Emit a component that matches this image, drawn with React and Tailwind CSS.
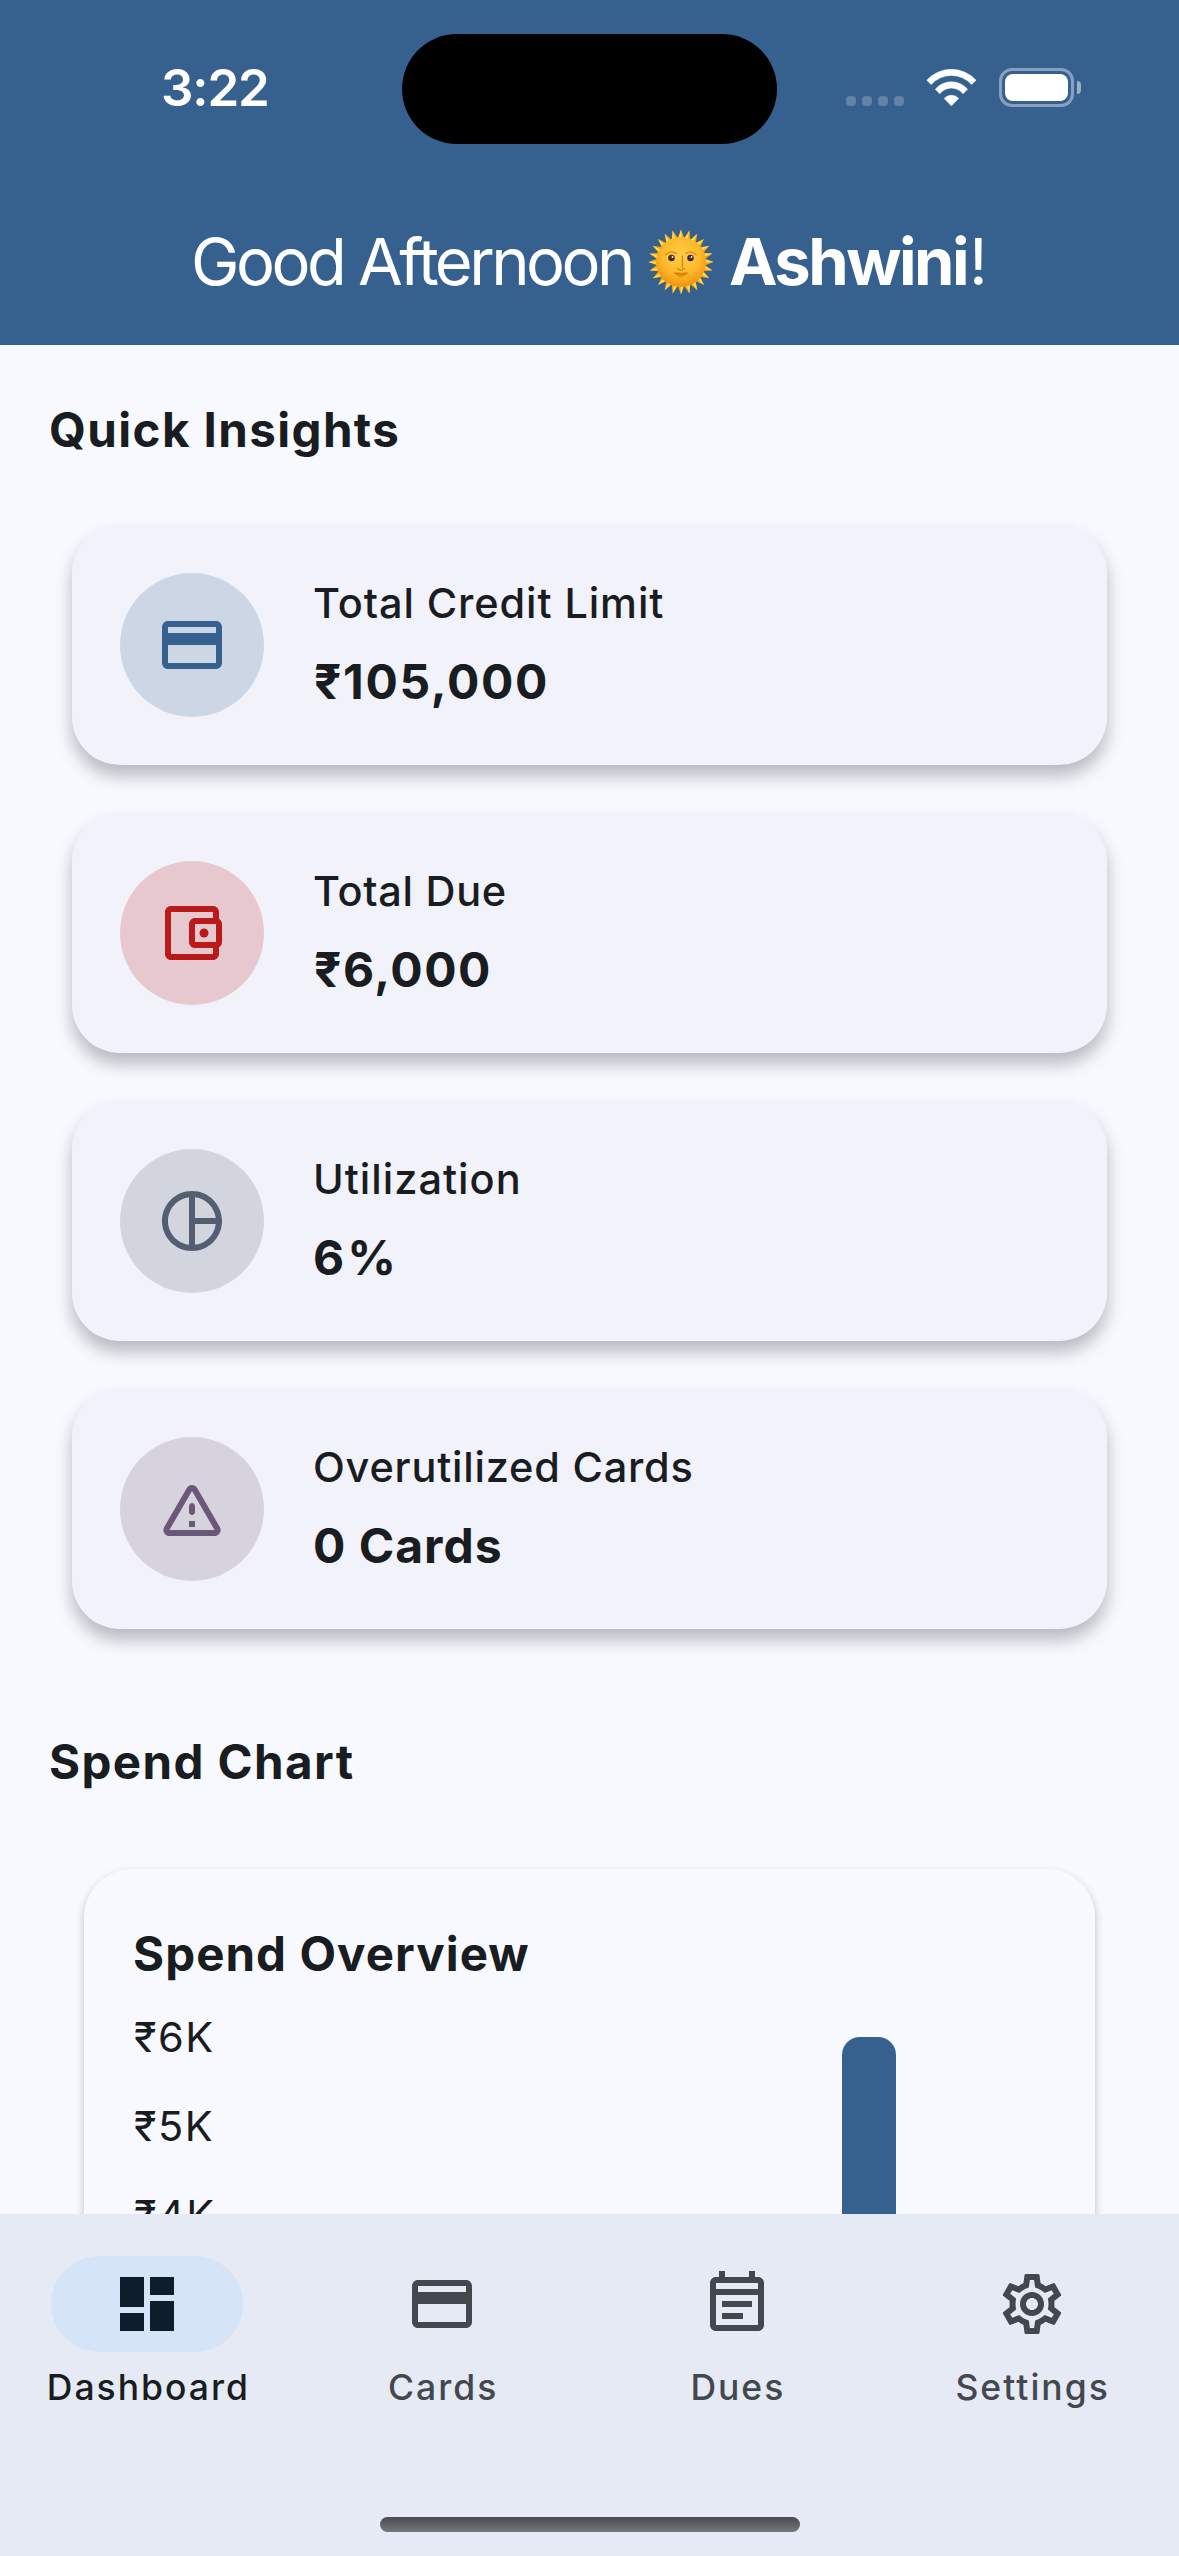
import React from "react";

const ICONS = {
  card: (
    <path d="M20 4H4c-1.11 0-1.99.89-1.99 2L2 18c0 1.11.89 2 2 2h16c1.11 0 2-.89 2-2V6c0-1.11-.89-2-2-2zm0 14H4v-6h16v6zm0-10H4V6h16v2z" />
  ),
  wallet: (
    <>
      <path d="M21 7.28V5c0-1.1-.9-2-2-2H5c-1.11 0-2 .9-2 2v14c0 1.1.89 2 2 2h14c1.1 0 2-.9 2-2v-2.28A2 2 0 0 0 22 15V9c0-.74-.41-1.38-1-1.72zM20 9v6h-7V9h7zM5 19V5h14v2h-6c-1.1 0-2 .9-2 2v6c0 1.1.9 2 2 2h6v2H5z" />
      <circle cx="16" cy="12" r="1.5" />
    </>
  ),
  pie: (
    <path d="M12 2C6.48 2 2 6.48 2 12s4.48 10 10 10 10-4.48 10-10S17.52 2 12 2zm1 2.07c3.61.45 6.48 3.32 6.93 6.93H13V4.07zM4 12c0-4.06 3.07-7.44 7-7.93v15.86c-3.93-.49-7-3.87-7-7.93zm9 7.93V13h6.93A8.002 8.002 0 0 1 13 19.93z" />
  ),
  warning: (
    <path d="M12 5.99L19.53 19H4.47L12 5.99M2.74 18c-.77 1.33.19 3 1.73 3h15.06c1.54 0 2.5-1.67 1.73-3L13.73 4.99c-.77-1.33-2.69-1.33-3.46 0L2.74 18zM11 11v2c0 .55.45 1 1 1s1-.45 1-1v-2c0-.55-.45-1-1-1s-1 .45-1 1zm0 5h2v2h-2z" />
  ),
  dashboard: <path d="M3 13h8V3H3v10zm0 8h8v-6H3v6zm10 0h8V11h-8v10zm0-18v6h8V3h-8z" />,
  event: (
    <path d="M19 3h-1V1h-2v2H8V1H6v2H5c-1.11 0-2 .9-2 2v14c0 1.1.89 2 2 2h14c1.1 0 2-.9 2-2V5c0-1.1-.9-2-2-2zm0 16H5V9h14v10zm0-12H5V5h14v2zM7 11h10v2H7zm0 4h7v2H7z" />
  ),
  settings: (
    <path d="M19.43 12.98c.04-.32.07-.64.07-.98 0-.34-.03-.66-.07-.98l2.11-1.65c.19-.15.24-.42.12-.64l-2-3.46a.5.5 0 0 0-.61-.22l-2.49 1c-.52-.4-1.08-.73-1.69-.98l-.38-2.65A.488.488 0 0 0 14 2h-4c-.25 0-.46.18-.49.42l-.38 2.65c-.61.25-1.17.59-1.69.98l-2.49-1a.566.566 0 0 0-.18-.03c-.17 0-.34.09-.43.25l-2 3.46c-.13.22-.07.49.12.64l2.11 1.65c-.04.32-.07.65-.07.98 0 .33.03.66.07.98l-2.11 1.65c-.19.15-.24.42-.12.64l2 3.46a.5.5 0 0 0 .61.22l2.49-1c.52.4 1.08.73 1.69.98l.38 2.65c.03.24.24.42.49.42h4c.25 0 .46-.18.49-.42l.38-2.65c.61-.25 1.17-.59 1.69-.98l2.49 1c.06.02.12.03.18.03.17 0 .34-.09.43-.25l2-3.46c.12-.22.07-.49-.12-.64l-2.11-1.65zm-1.98-1.71c.04.31.05.52.05.73 0 .21-.02.43-.05.73l-.14 1.13.89.7 1.08.84-.7 1.21-1.27-.51-1.04-.42-.9.68c-.43.32-.84.56-1.25.73l-1.06.43-.16 1.13-.2 1.35h-1.4l-.19-1.35-.16-1.13-1.06-.43c-.43-.18-.83-.41-1.23-.71l-.91-.7-1.06.43-1.27.51-.7-1.21 1.08-.84.89-.7-.14-1.13c-.03-.31-.05-.54-.05-.74s.02-.43.05-.73l.14-1.13-.89-.7-1.08-.84.7-1.21 1.27.51 1.04.42.9-.68c.43-.32.84-.56 1.25-.73l1.06-.43.16-1.13.2-1.35h1.39l.19 1.35.16 1.13 1.06.43c.43.18.83.41 1.23.71l.91.7 1.06-.43 1.27-.51.7 1.21-1.07.85-.89.7.14 1.13zM12 8c-2.21 0-4 1.79-4 4s1.79 4 4 4 4-1.79 4-4-1.79-4-4-4zm0 6c-1.1 0-2-.9-2-2s.9-2 2-2 2 .9 2 2-.9 2-2 2z" />
  ),
};

function Icon({ name, className }) {
  return (
    <svg viewBox="0 0 24 24" fill="currentColor" className={`size-[72px] ${className}`}>
      {ICONS[name]}
    </svg>
  );
}

const RAYS = Array.from({ length: 24 }, (_, i) => i * 15);

function SunFace() {
  return (
    <svg viewBox="-33 -33 66 66" className="size-[66px] shrink-0" role="img" aria-label="🌞">
      <defs>
        <radialGradient id="disc" cx="50%" cy="38%" r="62%">
          <stop offset="0" stopColor="#ffcf45" />
          <stop offset="0.6" stopColor="#fdb92c" />
          <stop offset="1" stopColor="#ef930f" />
        </radialGradient>
      </defs>
      {RAYS.map((a) => (
        <g key={a} transform={`rotate(${a})`}>
          <path d="M-3.4 -23.5L0 -32.6L3.4 -23.5Z" fill="#f3a21c" />
          <path d="M-2.6 -23.5L0 -32.6L0.8 -23.5Z" fill="#ffe04a" />
        </g>
      ))}
      <circle r="25" fill="url(#disc)" />
      <path d="M-15 -7.5Q-10 -12 -5 -8.5M15 -7.5Q10 -12 5 -8.5" fill="none" stroke="#e58f10" strokeWidth="1.6" strokeLinecap="round" />
      <ellipse cx="-9.7" cy="-4" rx="4.2" ry="3.4" fill="#f5cf90" />
      <ellipse cx="9.7" cy="-4" rx="4.2" ry="3.4" fill="#f5cf90" />
      <circle cx="-9.5" cy="-4" r="3.3" fill="#4a2a22" />
      <circle cx="9.5" cy="-4" r="3.3" fill="#4a2a22" />
      <circle cx="-8.5" cy="-5" r="0.9" fill="#fff" />
      <circle cx="10.5" cy="-5" r="0.9" fill="#fff" />
      <path d="M1.4 -6V5.5M-3.4 6.4Q0 9.8 3.4 6.4" fill="none" stroke="#dd8510" strokeWidth="1.4" strokeLinecap="round" />
      <path d="M-7 10.6Q-2 9.8 0 10.8Q2 9.8 7 10.6Q3.5 15.6 0 15.6Q-3.5 15.6 -7 10.6Z" fill="#e8940f" />
      <path d="M-6.4 11.4Q0 13.6 6.4 11.4" fill="none" stroke="#cf7509" strokeWidth="1" strokeLinecap="round" />
    </svg>
  );
}

function StatusBar() {
  return (
    <div className="flex h-[111px] items-start">
      <div className="ml-[161px] flex h-[107px] w-[241px] items-center text-[51px] leading-none font-semibold tracking-[-1.16px]">3:22</div>
      <div className="h-[110px] w-[375px] rounded-full bg-black" />
      <div className="mt-[62px] ml-[69px] flex gap-[6px]">
        <span className="size-[10px] rounded-[4px] bg-[#6182aa]" />
        <span className="size-[10px] rounded-[4px] bg-[#6182aa]" />
        <span className="size-[10px] rounded-[4px] bg-[#6182aa]" />
        <span className="size-[10px] rounded-[4px] bg-[#6182aa]" />
      </div>
      <svg viewBox="0 0 51 39" className="mt-[34px] ml-[22px] h-[39px] w-[51px]" fill="#fff" stroke="#fff" strokeWidth="0.6" strokeLinejoin="round">
        <path d="M0.8 12.2A33.3 33.3 0 0 1 50 12.2L45.6 16.5A27 27 0 0 0 5.2 16.5Z" />
        <path d="M9.3 21.2A21.3 21.3 0 0 1 41.5 21.2L37 25.7A14.6 14.6 0 0 0 13.8 25.7Z" />
        <path d="M18.2 30.4A10 10 0 0 1 32.6 30.4L25.4 37.8Z" />
      </svg>
      <div className="mt-[34px] ml-[22px] h-[39px] w-[75px] rounded-[13px] border-[3px] border-[#87a0bf] p-[3px]">
        <div className="h-[27px] rounded-[8px] bg-white" />
      </div>
      <div className="mt-[47px] ml-[3px] h-[13px] w-[4px] rounded-r-full bg-[#9bb0c8]" />
    </div>
  );
}

const INSIGHTS = [
  { icon: "card", tone: "bg-[#ccd6e5] text-[#36618e]", label: "Total Credit Limit", labelStyle: "pl-[1px] tracking-[0.9px]", value: "₹105,000", valueStyle: "pl-[2px] tracking-[1.65px]" },
  { icon: "wallet", tone: "bg-[#e7c8ce] text-[#ba1a1a]", label: "Total Due", labelStyle: "pl-[1px] tracking-[0.7px]", value: "₹6,000", valueStyle: "pl-[2px] tracking-[1.5px]" },
  { icon: "pie", tone: "bg-[#d2d5de] text-[#535f70]", label: "Utilization", labelStyle: "pl-[1px] tracking-[1px]", value: "6%", valueStyle: "pl-[1px] tracking-[3px]" },
  { icon: "warning", tone: "bg-[#d7d3de] text-[#6b5778]", label: "Overutilized Cards", labelStyle: "pl-[1px] tracking-[0.78px]", value: "0 Cards", valueStyle: "pl-[1px] tracking-[1px]" },
];

function InsightCard({ icon, tone, label, labelStyle, value, valueStyle }) {
  return (
    <div className="flex h-[240px] items-center gap-[48px] rounded-[48px] bg-[#f1f2fa] px-[48px] shadow-[0_11px_17px_rgba(0,0,0,0.26)]">
      <div className={`flex size-[144px] items-center justify-center rounded-full ${tone}`}>
        <Icon name={icon} className="" />
      </div>
      <div className="-mt-[1px] whitespace-nowrap">
        <div className={`text-[41.5px] leading-[70px] font-[450] ${labelStyle}`}>{label}</div>
        <div className={`mt-[4px] text-[48px] leading-[80px] font-[650] ${valueStyle}`}>{value}</div>
      </div>
    </div>
  );
}

const TABS = [
  { icon: "dashboard", label: "Dashboard", pill: "bg-[#d6e4f7]", iconColor: "text-[#0e1d2b]", labelColor: "text-[#191c20]" },
  { icon: "card", label: "Cards", pill: "", iconColor: "text-[#43474e]", labelColor: "text-[#43474e]" },
  { icon: "event", label: "Dues", pill: "", iconColor: "text-[#43474e]", labelColor: "text-[#43474e]" },
  { icon: "settings", label: "Settings", pill: "", iconColor: "text-[#43474e]", labelColor: "text-[#43474e]" },
];

export default function App() {
  return (
    <div className="flex h-[2556px] w-[1179px] flex-col overflow-hidden bg-[#f8f9ff] font-['Inter',sans-serif] text-[#191c20]">
      <header className="h-[345px] shrink-0 bg-[#36618e] pt-[34px] text-white">
        <StatusBar />
        <h1 className="mt-[66px] ml-[191px] flex h-[101px] items-center text-[65px] leading-none whitespace-nowrap">
          <span className="w-[457px] font-[370] tracking-[-3.5px]">Good Afternoon</span>
          <SunFace />
          <span className="ml-[15px] w-[240px] font-bold tracking-[-2.5px]">Ashwini</span>
          <span className="font-[370]">!</span>
        </h1>
      </header>

      <main className="flex-1 overflow-hidden">
        <h2 className="mt-[50px] ml-[49px] text-[47.5px] leading-[70px] font-[650] tracking-[1.4px]">Quick Insights</h2>
        <section className="mt-[60px] flex flex-col gap-[48px] px-[72px]">
          {INSIGHTS.map((item) => (
            <InsightCard key={item.label} {...item} />
          ))}
        </section>
        <h2 className="mt-[98px] ml-[49px] text-[47.5px] leading-[70px] font-[650] tracking-[1.4px]">Spend Chart</h2>
        <section className="mx-[84px] mt-[72px] h-[900px] rounded-[48px] bg-[#f8f9ff] px-[48px] pt-[50px] shadow-[0_4px_9px_rgba(0,0,0,0.24)]">
          <h3 className="pl-[1px] text-[47.5px] leading-[70px] font-[650] tracking-[1.05px]">Spend Overview</h3>
          <div className="mt-[3px] flex">
            <ul className="mt-[1px] w-[710px] pl-[2px] text-[41.5px] leading-[89px] tracking-[1.5px]">
              <li>₹6K</li>
              <li>₹5K</li>
              <li>₹4K</li>
            </ul>
            <div className="mt-[45px] h-[600px] w-[54px] rounded-t-[18px] bg-[#36618e]" />
          </div>
        </section>
      </main>

      <nav className="h-[342px] shrink-0 bg-[#e6eaf5] pt-[42px]">
        <div className="grid grid-cols-4">
          {TABS.map((tab) => (
            <div key={tab.label} className="flex flex-col items-center">
              <div className={`flex h-[96px] w-[192px] items-center justify-center rounded-full ${tab.pill}`}>
                <Icon name={tab.icon} className={tab.iconColor} />
              </div>
              <span className={`mt-[11px] pl-[2px] text-[35.5px] leading-[50px] font-[450] tracking-[2px] ${tab.labelColor}`}>{tab.label}</span>
            </div>
          ))}
        </div>
        <div className="mx-auto mt-[104px] h-[15px] w-[420px] rounded-full bg-linear-to-b from-[#484b50] to-[#75777d]" />
      </nav>
    </div>
  );
}
